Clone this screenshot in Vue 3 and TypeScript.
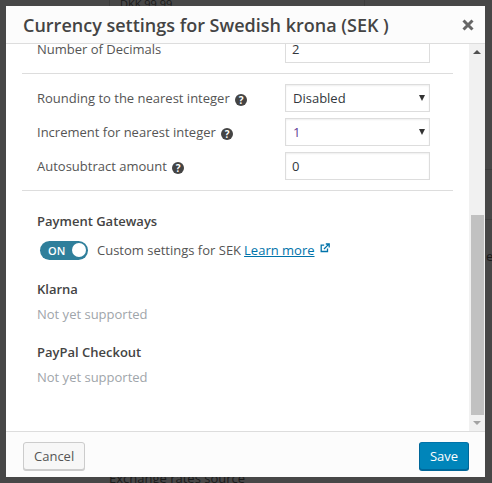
<script setup lang="ts">
interface Row {
  label: string
  kind: 'select' | 'input'
  value: string
  colored?: boolean
}

const rows: Row[] = [
  { label: 'Rounding to the nearest integer', kind: 'select', value: 'Disabled' },
  { label: 'Increment for nearest integer', kind: 'select', value: '1', colored: true },
  { label: 'Autosubtract amount', kind: 'input', value: '0' }
]

const gateways = ['Klarna', 'PayPal Checkout']
</script>

<template>
  <div class="page">
    <i class="line line--v1"></i>
    <i class="line line--v2"></i>
    <i class="line line--h1"></i>
    <i class="line line--h2"></i>
    <span class="behind behind--top">DKK 99.99</span>
    <span class="behind behind--side">es</span>
    <span class="behind behind--bottom">Exchange rates source</span>
    <section class="dialog">
      <header class="dialog__head">
        <h2>Currency settings for Swedish krona (SEK )</h2>
        <svg class="close" viewBox="0 0 12 12" aria-hidden="true">
          <path d="M1.5 1.5l9 9M10.5 1.5l-9 9" />
        </svg>
      </header>
      <div class="dialog__main">
        <div class="content">
          <div class="row row--first">
            <span class="row__label">Number of Decimals</span>
            <div class="field field--cut">2</div>
          </div>
          <hr />
          <div class="rows">
            <div v-for="row in rows" :key="row.label" class="row">
              <span class="row__label">
                {{ row.label }}
                <span class="help">?</span>
              </span>
              <div class="field" :class="{ 'field--select': row.kind === 'select', 'field--colored': row.colored }">
                {{ row.value }}
                <i v-if="row.kind === 'select'" class="caret"></i>
              </div>
            </div>
          </div>
          <hr />
          <h3 class="title-pay">Payment Gateways</h3>
          <div class="switch-row">
            <span class="switch"><b>ON</b><i></i></span>
            <span>Custom settings for SEK</span>
            <a href="#">Learn more</a>
            <svg class="ext" viewBox="0 0 10 10" aria-hidden="true">
              <path d="M7.5 5.6v2.9H1.2V2.2h3" />
              <path d="M4 6l4.6-4.6M5.8 1h3.4v3.4" />
            </svg>
          </div>
          <div v-for="gw in gateways" :key="gw" class="gateway">
            <h3>{{ gw }}</h3>
            <p>Not yet supported</p>
          </div>
        </div>
        <div class="scroll">
          <i class="arrow arrow--up"></i>
          <div class="scroll__track"><div class="scroll__thumb"></div></div>
          <i class="arrow arrow--down"></i>
        </div>
      </div>
      <footer class="dialog__foot">
        <button class="btn">Cancel</button>
        <button class="btn btn--primary">Save</button>
      </footer>
    </section>
  </div>
</template>

<style scoped>
.page {
  position: relative;
  height: 483px;
  padding: 6px 7px 6px 6px;
  box-sizing: border-box;
  background: #474747;
  overflow: hidden;
  font-family: "Open Sans", sans-serif;
  font-size: 13px;
  color: #555;
}

.behind {
  position: absolute;
  color: #1b1b1b;
  font-size: 13px;
  line-height: 16px;
}

.behind--top {
  left: 120px;
  top: -4px;
  font-size: 11px;
}

.behind--side {
  left: 486px;
  top: 248px;
}

.behind--bottom {
  left: 109px;
  top: 470px;
}

.line {
  position: absolute;
  background: #3d3d3d;
}

.line--v1,
.line--v2 {
  top: 0;
  width: 1px;
  height: 6px;
}

.line--v1 {
  left: 109px;
}

.line--v2 {
  left: 364px;
}

.line--h1,
.line--h2 {
  left: 485px;
  width: 7px;
  height: 1px;
}

.line--h1 {
  top: 169px;
}

.line--h2 {
  top: 219px;
}

.dialog {
  position: relative;
  height: 471px;
  background: #fff;
  display: flex;
  flex-direction: column;
}

.dialog__head {
  flex: none;
  height: 38px;
  box-sizing: border-box;
  display: flex;
  align-items: center;
  justify-content: space-between;
  padding: 0 11px 0 17px;
  background: #fcfcfc;
  border-bottom: 1px solid #ddd;
}

h2 {
  margin: 0;
  font-size: 18px;
  font-weight: 600;
  color: #444;
}

.close {
  width: 12px;
  height: 12px;
  fill: none;
  stroke: #666;
  stroke-width: 3;
}

.dialog__main {
  flex: 1;
  min-height: 0;
  display: flex;
}

.content {
  flex: 1;
  min-width: 0;
  padding: 0 16px 0 16px;
  overflow: hidden;
}

.row {
  display: flex;
  align-items: center;
  justify-content: space-between;
  padding: 0 23px 0 15px;
}

.row--first {
  height: 19px;
  align-items: flex-start;
}

.row--first .row__label {
  margin-top: -4px;
}

.row__label {
  line-height: 18px;
}

.field {
  position: relative;
  width: 145px;
  height: 28px;
  box-sizing: border-box;
  padding-left: 6px;
  line-height: 26px;
  background: #fff;
  border: 1px solid #ddd;
  box-shadow: inset 0 1px 2px rgba(0, 0, 0, 0.07);
  color: #32373c;
}

.field--cut {
  height: 19px;
  line-height: 11px;
  border-top: none;
  box-shadow: none;
  overflow: hidden;
}

.field--select {
  padding-left: 7px;
}

.field--colored {
  color: #5f3a96;
}

.caret {
  position: absolute;
  right: 4px;
  top: 10px;
  border-left: 3.5px solid transparent;
  border-right: 3.5px solid transparent;
  border-top: 6px solid #333;
}

hr {
  margin: 10px 0 0;
  border: none;
  border-top: 1px solid #ddd;
}

.rows {
  display: flex;
  flex-direction: column;
  gap: 6px;
  padding-top: 10px;
}

.rows + hr {
  margin-top: 10px;
}

.help {
  display: inline-block;
  width: 12px;
  height: 12px;
  margin-left: 2px;
  border-radius: 50%;
  background: #444;
  color: #fff;
  font-size: 10px;
  font-weight: 700;
  line-height: 12px;
  text-align: center;
  vertical-align: -1px;
}

h3 {
  margin: 0;
  font-size: 13px;
  font-weight: 600;
  color: #444;
  line-height: 18px;
}

.title-pay {
  margin: 21px 0 0 15px;
}

.switch-row {
  display: flex;
  align-items: center;
  margin: 10px 0 0 18px;
  height: 20px;
}

.switch-row a {
  margin-left: 3px;
  color: #0073aa;
  text-decoration: underline;
}

.switch {
  display: flex;
  align-items: center;
  justify-content: space-between;
  width: 48px;
  height: 19px;
  box-sizing: border-box;
  padding: 0 2px 0 8px;
  margin-right: 9px;
  border-radius: 10px;
  background: #2f7f9b;
  color: #fff;
  font-size: 11px;
}

.switch b {
  font-weight: 600;
}

.switch i {
  width: 14px;
  height: 14px;
  border-radius: 50%;
  background: #fff;
}

.ext {
  width: 10px;
  height: 10px;
  margin: -4px 0 0 5px;
  fill: none;
  stroke: #0073aa;
  stroke-width: 1.3;
}

.gateway {
  margin: 0 0 0 15px;
  padding-top: 20px;
}

.gateway p {
  margin: 7px 0 0;
  line-height: 18px;
  color: #a0a5aa;
}

.scroll {
  flex: none;
  width: 16px;
  display: flex;
  flex-direction: column;
  background: #f1f1f1;
}

.scroll__track {
  flex: 1;
  display: flex;
  flex-direction: column;
  justify-content: flex-end;
}

.scroll__thumb {
  height: 200px;
  margin: 0 1px 0 2px;
  background: #c1c1c1;
}

.arrow {
  flex: none;
  height: 16px;
  display: flex;
  align-items: center;
  justify-content: center;
}

.arrow::before {
  content: "";
  border-left: 4px solid transparent;
  border-right: 4px solid transparent;
}

.arrow--up::before {
  border-bottom: 4px solid #505050;
}

.arrow--down::before {
  border-top: 4px solid #a3a3a3;
}

.dialog__foot {
  flex: none;
  height: 46px;
  box-sizing: border-box;
  display: flex;
  align-items: center;
  justify-content: space-between;
  padding: 2px 16px 0 17px;
  background: #fcfcfc;
  border-top: 1px solid #ddd;
}

.btn {
  height: 28px;
  padding: 0 10px;
  font-family: inherit;
  font-size: 13px;
  color: #555;
  background: #f7f7f7;
  border: 1px solid #ccc;
  border-radius: 3px;
  box-shadow: 0 1px 0 #ccc;
}

.btn--primary {
  width: 50px;
  padding: 0;
  color: #fff;
  background: #0085ba;
  border-color: #0073aa #006799 #006799;
  box-shadow: 0 1px 0 #006799;
}
</style>
